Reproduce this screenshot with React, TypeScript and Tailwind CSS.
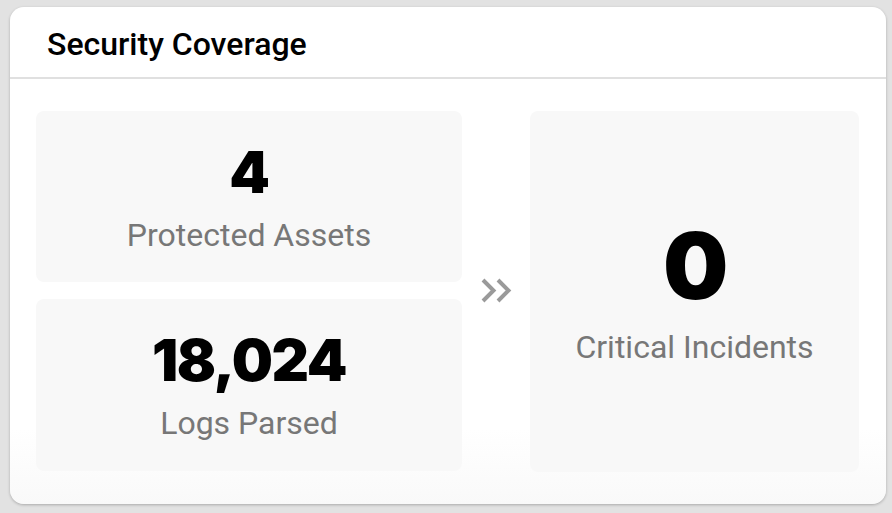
import React from 'react';

const Stat: React.FC<{ value: string; label: string; big?: boolean; className?: string }> = ({ value, label, big, className }) => (
  <div className={`flex flex-col items-center justify-center rounded-lg bg-[#f8f8f8] ${className ?? ''}`}>
    <div
      className={`font-black text-black leading-none tracking-tight ${big ? 'text-[92px]' : 'text-[58px]'}`}
      style={{ fontFamily: 'Inter, "Liberation Sans", sans-serif' }}
    >
      {value}
    </div>
    <div className={`text-[32px] text-[#777] leading-none ${big ? 'mt-[19px]' : 'mt-[18px]'}`}>{label}</div>
  </div>
);

export default function App() {
  return (
    <div className="w-[892px] h-[513px] bg-[#e2e2e2] pt-[7px] pl-[10px] pr-[6px] pb-[9px]" style={{ fontFamily: 'Roboto, "Liberation Sans", sans-serif' }}>
      <div className="h-full rounded-[14px] bg-gradient-to-b from-white from-85% to-[#f9f9f9] shadow-[0_1px_3px_rgba(0,0,0,0.25)] flex flex-col overflow-hidden">
        <div className="h-[72px] shrink-0 flex items-center pl-[37px] border-b-2 border-[#e0e0e0]">
          <h1 className="text-[32px] font-medium text-black pt-[3px] leading-none">Security Coverage</h1>
        </div>
        <div className="flex-1 flex pt-[32px] pb-[32px] pl-[26px] pr-[25px]">
          <div className="w-[426px] flex flex-col gap-[17px]">
            <Stat value="4" label="Protected Assets" className="h-[171px]" />
            <Stat value="18,024" label="Logs Parsed" className="h-[172px]" />
          </div>
          <div className="w-[68px] flex items-center justify-center pb-[2px]">
            <svg width="33" height="25" viewBox="0 0 33 25" fill="none" stroke="#9a9a9a" strokeWidth="4" strokeLinecap="butt" strokeLinejoin="miter">
              <path d="M3 2l10.5 10.5L3 23" />
              <path d="M18 2l10.5 10.5L18 23" />
            </svg>
          </div>
          <Stat value="0" label="Critical Incidents" big className="w-[329px]" />
        </div>
      </div>
    </div>
  );
}
